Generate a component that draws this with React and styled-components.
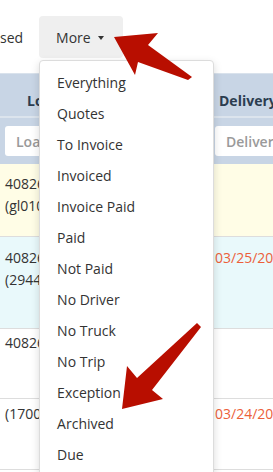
import React from 'react'
import styled, { createGlobalStyle } from 'styled-components'

const GlobalStyle = createGlobalStyle`
  html, body {
    margin: 0;
    padding: 0;
    overflow: hidden;
    background: #fff;
  }
  body {
    font-family: "Open Sans", "Noto Sans", sans-serif;
    font-size: 14px;
    color: #333;
  }
`

const menuItems = [
  'Everything', 'Quotes', 'To Invoice', 'Invoiced', 'Invoice Paid', 'Paid',
  'Not Paid', 'No Driver', 'No Truck', 'No Trip', 'Exception', 'Archived', 'Due',
]

const rows = [
  { bg: '#fffde6', height: 73, pad: 9, lines: ['40826', '(gl010'], date: '' },
  { bg: '#e9f9fb', height: 92, pad: 10, lines: ['40826', '(29440'], date: '03/25/20' },
  { bg: '#fff', height: 70, pad: 3, lines: ['40826'], date: '' },
  { bg: '#fff', height: 71, pad: 4, lines: ['(1700'], date: '03/24/20' },
]

function App() {
  return (
    <Page>
      <GlobalStyle />
      <Toolbar>
        <Tab>sed</Tab>
        <MoreWrap>
          <MoreButton>
            More <Caret />
          </MoreButton>
          <Menu>
            {menuItems.map((item) => (
              <MenuItem key={item}>{item}</MenuItem>
            ))}
          </Menu>
        </MoreWrap>
      </Toolbar>

      <Table>
        <HeadRow>
          <HeadCell indent={27}>Load #</HeadCell>
          <HeadCell indent={9} />
          <HeadCell indent={9}>Delivery Date</HeadCell>
        </HeadRow>
        <FilterRow>
          <FilterCell><Filter placeholder="Load #" /></FilterCell>
          <FilterCell><Filter /></FilterCell>
          <FilterCell><Filter placeholder="Delivery Date" /></FilterCell>
        </FilterRow>
        {rows.map((r, i) => (
          <Row key={i} bg={r.bg} h={r.height} pad={r.pad}>
            <Cell>
              {r.lines.map((l) => <Line key={l}>{l}</Line>)}
            </Cell>
            <Cell />
            <Cell><Line><DateText>{r.date}</DateText></Line></Cell>
          </Row>
        ))}
      </Table>

      <Arrows width="273" height="472" viewBox="0 0 273 472">
        <polygon points="114,37 158,33 148,45 192,77 188,80 138,62 135,75" />
        <polygon points="122,409 127,366 137,378 197,323 201,327 152,390 163,399" />
      </Arrows>
    </Page>
  )
}

export default App

const Page = styled.div`
  position: relative;
  width: 273px;
  height: 472px;
  overflow: hidden;
`

const Toolbar = styled.div`
  height: 73px;
  display: flex;
  align-items: center;
  position: relative;
  z-index: 5;
`

const Tab = styled.span`
  font-size: 14px;
  color: #333;
  margin-top: 1px;
`

const MoreWrap = styled.div`
  position: relative;
  margin-left: 16px;
  margin-top: 1px;
`

const MoreButton = styled.button`
  display: flex;
  align-items: center;
  height: 42px;
  padding: 0 19px 0 17px;
  border: none;
  border-radius: 4px;
  background: #efefef;
  font-family: "Open Sans", sans-serif;
  font-size: 14px;
  color: #333;
`

const Caret = styled.span`
  display: inline-block;
  margin-left: 7px;
  margin-top: 2px;
  border-top: 4px solid #333;
  border-left: 3.5px solid transparent;
  border-right: 3.5px solid transparent;
`

const Menu = styled.ul`
  position: absolute;
  top: 44px;
  left: 0;
  width: 173px;
  margin: 0;
  padding: 6px 0;
  list-style: none;
  background: #fff;
  border: 1px solid #dcdcdc;
  border-radius: 4px;
  box-shadow: 0 3px 8px rgba(0, 0, 0, 0.15);
`

const MenuItem = styled.li`
  height: 31px;
  line-height: 31px;
  padding: 0 17px;
  color: #333;
  white-space: nowrap;
`

const Table = styled.div`
  width: 360px;
`

const HeadRow = styled.div`
  display: grid;
  grid-template-columns: 105px 105px 150px;
  height: 42px;
  align-items: center;
  background: #c8d5e5;
  border-top: 1px solid #d9e2ec;
  border-bottom: 2px solid #dce4ed;
`

const HeadCell = styled.div`
  font-weight: 700;
  color: #2c3d50;
  white-space: nowrap;
  padding-left: ${(p) => p.indent}px;
  margin-top: 10px;
`

const FilterRow = styled.div`
  display: grid;
  grid-template-columns: 105px 105px 150px;
  height: 46px;
  background: #c8d5e5;
  padding-top: 8px;
  box-sizing: border-box;
`

const FilterCell = styled.div`
  padding: 0 5px;
`

const Filter = styled.input`
  width: 100%;
  height: 30px;
  box-sizing: border-box;
  border: none;
  border-radius: 3px;
  padding: 0 11px;
  background: #fff;
  font-family: "Open Sans", sans-serif;
  font-size: 14px;
  &::placeholder {
    color: #9a9a9a;
    font-weight: 600;
  }
`

const Row = styled.div`
  display: grid;
  grid-template-columns: 105px 105px 150px;
  align-items: start;
  height: ${(p) => p.h}px;
  box-sizing: border-box;
  background: ${(p) => p.bg};
  border-bottom: 1px solid #dddddd;
  padding-top: ${(p) => p.pad}px;
`

const Cell = styled.div`
  padding: 0 5px;
  white-space: nowrap;
`

const Line = styled.div`
  height: 22px;
  line-height: 22px;
`

const DateText = styled.span`
  color: #ec5f3a;
`

const Arrows = styled.svg`
  position: absolute;
  top: 0;
  left: 0;
  z-index: 10;
  pointer-events: none;
  polygon {
    fill: #b80e00;
  }
`
